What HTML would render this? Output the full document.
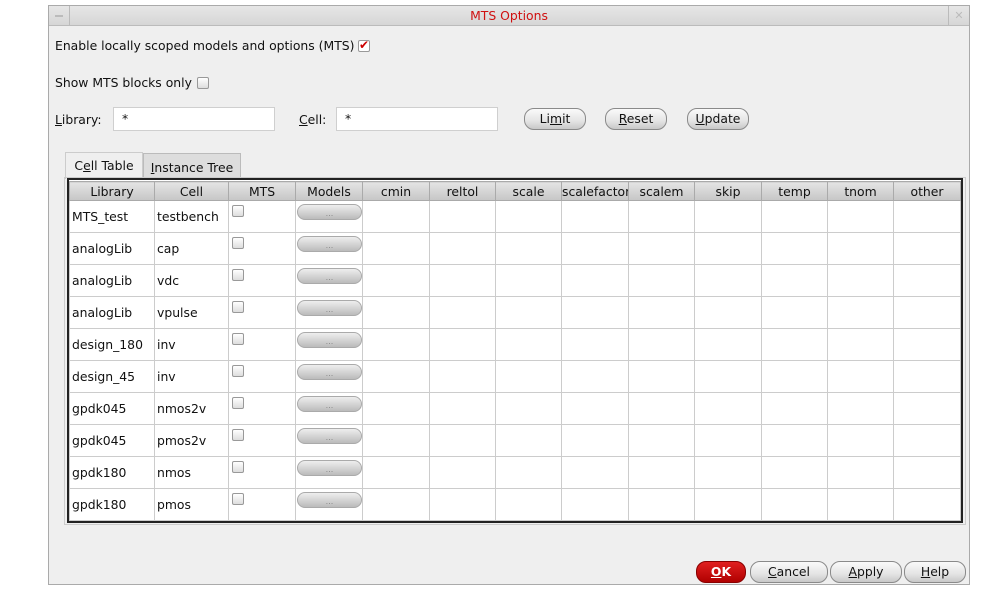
<!DOCTYPE html>
<html><head><style>
body{margin:0;width:988px;height:590px;background:#fff;font-family:"DejaVu Sans","Liberation Sans",sans-serif;font-size:12.4px;color:#111;position:relative;overflow:hidden}
.a{position:absolute}
.win{left:48px;top:5px;width:922px;height:580px;background:#efefef;border:1px solid #aaa;box-sizing:border-box}
.title{left:49px;top:6px;width:920px;height:19px;background:linear-gradient(#e6e6e6,#d6d6d6);border-bottom:1px solid #bbb;text-align:center;color:#d01010;font-size:12.4px;line-height:19px}
.btn{border:1px solid #8a8a8a;border-radius:10px;background:linear-gradient(#fafafa,#e4e4e4 60%,#c8c8c8);text-align:center;font-size:12.4px;line-height:20px;height:20px;box-sizing:content-box}
.inp{background:#fff;border:1px solid #cfcfcf;height:24px;line-height:22px;padding-left:8px;box-sizing:border-box}
.cb{width:10px;height:10px;border:1px solid #999;background:linear-gradient(#fff,#ddd);border-radius:2px}
table{border-collapse:collapse;table-layout:fixed}
td,th{border:1px solid #ccc;padding:0;font-weight:normal;font-size:12.4px;overflow:hidden;white-space:nowrap}
th{background:linear-gradient(#e4e4e4,#c6c6c6);height:18px;text-align:center;border-color:#aaa}
td{height:31px;background:#fff;padding-left:2px;vertical-align:middle;position:relative}
.mb{position:absolute;left:1px;top:3px;width:63px;height:14px;border-radius:8px;background:linear-gradient(#eee,#bbb);border:1px solid #aaa;font-size:8px;line-height:18px;color:#888;text-align:center}
.cbt{position:absolute;left:3px;top:4px}
u{text-decoration:underline}
</style></head><body>
<div class="a win"></div>
<div class="a title">MTS Options</div>
<div class="a" style="left:49px;top:6px;width:20px;height:19px;border-right:1px solid #bbb"><div class="a" style="left:6px;top:9px;width:8px;height:2px;background:#bbb"></div></div>
<div class="a" style="left:948px;top:6px;width:20px;height:19px;border-left:1px solid #bbb;color:#bbb;font-size:11px;line-height:19px;text-align:center">✕</div>

<div class="a" style="left:55px;top:38px">Enable locally scoped models and options (MTS)</div>
<div class="a cb" style="left:358px;top:40px;background:#fff;color:#c00;font-size:12px;line-height:9px;text-align:center;font-weight:bold">✔</div>
<div class="a" style="left:55px;top:75px">Show MTS blocks only</div>
<div class="a cb" style="left:197px;top:77px"></div>

<div class="a" style="left:55px;top:112px"><u>L</u>ibrary:</div>
<div class="a inp" style="left:113px;top:107px;width:162px">*</div>
<div class="a" style="left:299px;top:112px"><u>C</u>ell:</div>
<div class="a inp" style="left:336px;top:107px;width:162px">*</div>
<div class="a btn" style="left:524px;top:108px;width:60px">Li<u>m</u>it</div>
<div class="a btn" style="left:605px;top:108px;width:60px"><u>R</u>eset</div>
<div class="a btn" style="left:687px;top:108px;width:60px"><u>U</u>pdate</div>

<div class="a" style="left:65px;top:152px;width:76px;height:26px;background:#efefef;border:1px solid #ccc;border-bottom:none;text-align:center;line-height:26px">C<u>e</u>ll Table</div>
<div class="a" style="left:143px;top:153px;width:96px;height:25px;background:#ddd;border:1px solid #bbb;border-bottom:none;text-align:center;line-height:27px"><u>I</u>nstance Tree</div>
<div class="a" style="left:64px;top:177px;width:902px;height:348px;border:1px solid #ccc;box-sizing:border-box"></div>
<div class="a" style="left:67px;top:178px;width:896px;height:345px;border:2px solid #222;box-sizing:border-box;background:#fff;overflow:hidden">
<table style="width:891px;margin:1px 0 0 0">
<colgroup><col style="width:85px"><col style="width:74px"><col style="width:67px"><col style="width:67px"><col style="width:67px"><col style="width:66px"><col style="width:66px"><col style="width:67px"><col style="width:66px"><col style="width:67px"><col style="width:66px"><col style="width:66px"><col style="width:67px"></colgroup>
<tr><th>Library</th><th>Cell</th><th>MTS</th><th>Models</th><th>cmin</th><th>reltol</th><th>scale</th><th>scalefactor</th><th>scalem</th><th>skip</th><th>temp</th><th>tnom</th><th>other</th></tr>
<tr><td>MTS_test</td><td>testbench</td><td><div class="a cb cbt"></div></td><td><div class="mb">...</div></td><td></td><td></td><td></td><td></td><td></td><td></td><td></td><td></td><td></td></tr>
<tr><td>analogLib</td><td>cap</td><td><div class="a cb cbt"></div></td><td><div class="mb">...</div></td><td></td><td></td><td></td><td></td><td></td><td></td><td></td><td></td><td></td></tr>
<tr><td>analogLib</td><td>vdc</td><td><div class="a cb cbt"></div></td><td><div class="mb">...</div></td><td></td><td></td><td></td><td></td><td></td><td></td><td></td><td></td><td></td></tr>
<tr><td>analogLib</td><td>vpulse</td><td><div class="a cb cbt"></div></td><td><div class="mb">...</div></td><td></td><td></td><td></td><td></td><td></td><td></td><td></td><td></td><td></td></tr>
<tr><td>design_180</td><td>inv</td><td><div class="a cb cbt"></div></td><td><div class="mb">...</div></td><td></td><td></td><td></td><td></td><td></td><td></td><td></td><td></td><td></td></tr>
<tr><td>design_45</td><td>inv</td><td><div class="a cb cbt"></div></td><td><div class="mb">...</div></td><td></td><td></td><td></td><td></td><td></td><td></td><td></td><td></td><td></td></tr>
<tr><td>gpdk045</td><td>nmos2v</td><td><div class="a cb cbt"></div></td><td><div class="mb">...</div></td><td></td><td></td><td></td><td></td><td></td><td></td><td></td><td></td><td></td></tr>
<tr><td>gpdk045</td><td>pmos2v</td><td><div class="a cb cbt"></div></td><td><div class="mb">...</div></td><td></td><td></td><td></td><td></td><td></td><td></td><td></td><td></td><td></td></tr>
<tr><td>gpdk180</td><td>nmos</td><td><div class="a cb cbt"></div></td><td><div class="mb">...</div></td><td></td><td></td><td></td><td></td><td></td><td></td><td></td><td></td><td></td></tr>
<tr><td>gpdk180</td><td>pmos</td><td><div class="a cb cbt"></div></td><td><div class="mb">...</div></td><td></td><td></td><td></td><td></td><td></td><td></td><td></td><td></td><td></td></tr>
</table></div>

<div class="a btn" style="left:696px;top:561px;width:48px;background:linear-gradient(#e02020,#b00000);border-color:#800;color:#fff;font-weight:bold"><u>O</u>K</div>
<div class="a btn" style="left:750px;top:561px;width:76px"><u>C</u>ancel</div>
<div class="a btn" style="left:830px;top:561px;width:70px"><u>A</u>pply</div>
<div class="a btn" style="left:904px;top:561px;width:60px"><u>H</u>elp</div>
</body></html>
